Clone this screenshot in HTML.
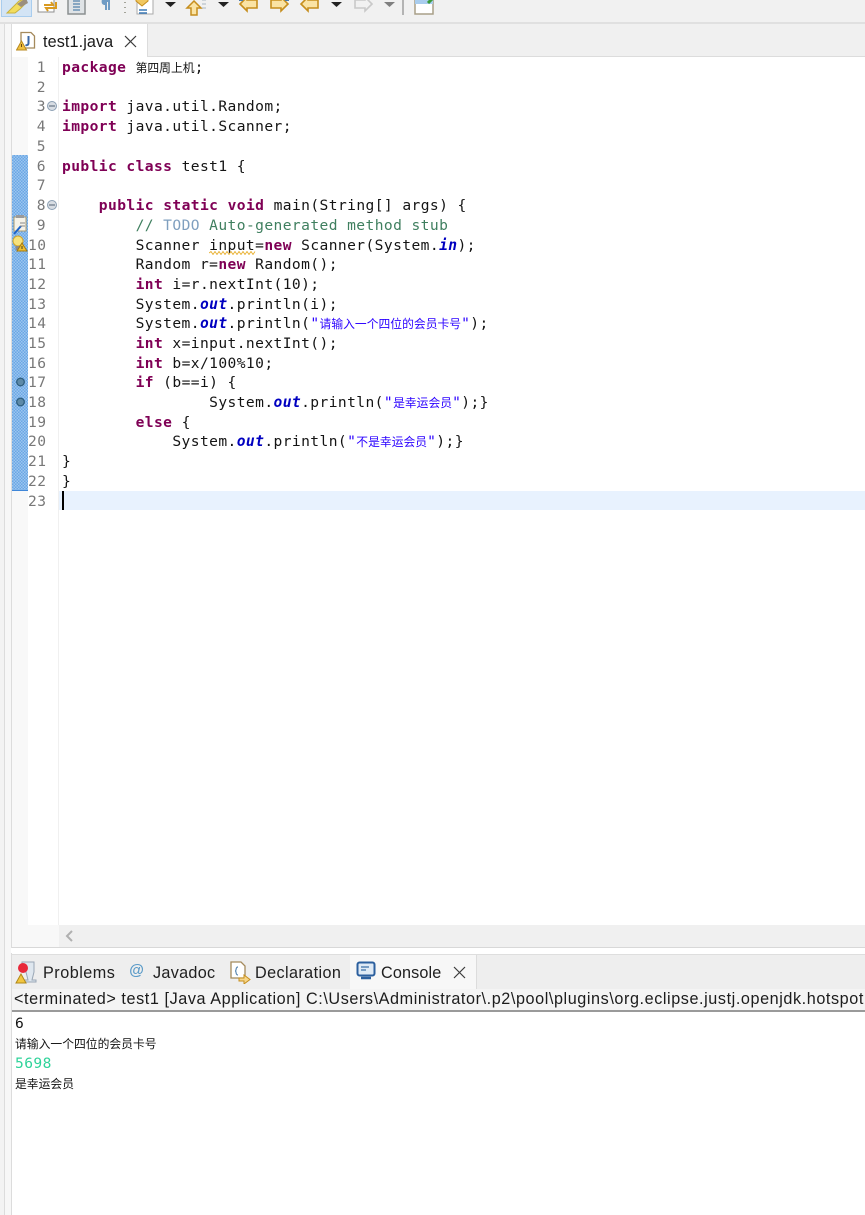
<!DOCTYPE html>
<html lang="zh"><head><meta charset="utf-8"><title>test1.java</title>
<style>
html,body{margin:0;padding:0}
body{width:865px;height:1215px;position:relative;overflow:hidden;background:#fff}
#w{position:absolute;inset:0;filter:blur(.35px)}
.a{position:absolute}
.l{position:absolute;left:62px;margin-top:1px;height:20px;font:14.6px/20px "DejaVu Sans Mono","Noto Sans CJK SC",monospace;letter-spacing:.41px;color:#141414;white-space:pre;font-weight:400}
.n{position:absolute;left:28px;margin-top:1px;width:18px;text-align:right;font:14.6px/20px "DejaVu Sans Mono",monospace;letter-spacing:.41px;color:#787878;height:20px}
.k{color:#7f0055;font-weight:700}
.f{color:#0000c0;font-style:italic;font-weight:700}
.c{color:#3f7f5f}
.t{color:#7f9fbf}
.cj{font:11.8px/20px "Noto Sans CJK SC",sans-serif;letter-spacing:0;color:#111}
.s{color:#2a00ff}
.s .cj{color:#2a00ff}
.u{font:16.2px/20px "Liberation Sans",sans-serif;letter-spacing:.3px;color:#202020;position:absolute;white-space:pre}
</style></head><body><div id="w">
<!-- toolbar -->
<div class="a" style="left:0;top:0;width:865px;height:22px;background:#f1f1f1"></div>
<div class="a" style="left:0;top:22px;width:865px;height:2px;background:#e0e0e0"></div>
<svg class="a" style="left:0;top:0" width="450" height="20" viewBox="0 0 450 20">
<rect x="1.5" y="-2" width="30" height="18.500" fill="#d3e4f5" stroke="#a9cdee"/>
<path d="M7 13 L14 6 L19 1 L24 -1 L26 3 L20 9 L15 13Z" fill="#f2dd5e" stroke="#c9b23f"/><path d="M17 4 L26 -2 L28 3 L21 7Z" fill="#9a8f7e"/>
<rect x="38" y="-2" width="16" height="14" fill="#fff" stroke="#8f8f8f"/><path d="M44 5h9l-2-3M56 2v6h-10l2 3" fill="none" stroke="#d99a20" stroke-width="2"/>
<rect x="68" y="-2" width="17" height="16" fill="#dfe3e6" stroke="#8b8f90" stroke-width="1.500"/><path d="M73 1h7M73 4h7M73 7h7M73 10h7" stroke="#5583ac" stroke-width="1.300"/>
<path d="M102 -1h8v11h-2V2h-1v8h-2V5c-3 0-4-2-3-6z" fill="#6f9bc4"/>
<path d="M125 2v1M125 7v1M125 12v1" stroke="#a3a399" stroke-width="2"/>
<rect x="137" y="-2" width="16" height="16" fill="#fff" stroke="#aaa"/><path d="M136 1l6 5 6-5v-2h-12z" fill="#f0c760" stroke="#c68e1d"/><path d="M139 10h8M139 13h8" stroke="#3a78b5" stroke-width="1.500"/>
<path d="M165 2h11l-5.500 5z" fill="#222"/>
<path d="M194 1l-7 7h4v7h6V8h4z" fill="#fae3a4" stroke="#c68e1d" stroke-width="1.500"/><path d="M202 0h4M202 4h4M202 8h4" stroke="#a9b7c4"/>
<path d="M218 2h11l-5.500 5z" fill="#222"/>
<path d="M240 4l7 7v-3h10V0h-10v-3z" fill="#fae3a4" stroke="#c68e1d" stroke-width="1.600"/><path d="M239 0h4" stroke="#4d7dab" stroke-width="2"/>
<path d="M288 4l-7 7v-3h-10V0h10v-3z" fill="#fae3a4" stroke="#c68e1d" stroke-width="1.600"/><path d="M285 0h4" stroke="#4d7dab" stroke-width="2"/>
<path d="M301 4l7 7v-3h10V0h-10v-3z" fill="#fae3a4" stroke="#c68e1d" stroke-width="1.600"/>
<path d="M331 2h11l-5.500 5z" fill="#222"/>
<path d="M372 4l-7 7v-3h-10V0h10v-3z" fill="#f1f1f1" stroke="#c9c9c9" stroke-width="1.600"/>
<path d="M384 2h11l-5.500 5z" fill="#808080"/>
<path d="M403 0v15" stroke="#a0a0a0" stroke-width="1.500"/>
<rect x="415" y="-2" width="18" height="16" fill="#fff" stroke="#a99f88" stroke-width="1.500"/><rect x="415" y="-2" width="18" height="6" fill="#a9cdee"/><path d="M428 3l5-5" stroke="#3a9a3a" stroke-width="3"/>
</svg>
<!-- left strips -->
<div class="a" style="left:0;top:24px;width:4px;height:1191px;background:#f3f3f3"></div>
<div class="a" style="left:4px;top:24px;width:1px;height:1191px;background:#dcdcdc"></div>
<div class="a" style="left:11px;top:24px;width:1px;height:924px;background:#dcdcdc"></div>
<div class="a" style="left:11px;top:953px;width:1px;height:262px;background:#dcdcdc"></div>
<div class="a" style="left:5px;top:24px;width:6px;height:1191px;background:#f7f7f7"></div>
<!-- editor tabs -->
<div class="a" style="left:12px;top:24px;width:853px;height:32px;background:#f0f0f0"></div>
<div class="a" style="left:12px;top:56px;width:853px;height:1px;background:#dcdcdc"></div>
<div class="a" style="left:12px;top:24px;width:135px;height:33px;background:#fff"></div>
<div class="a" style="left:147px;top:24px;width:1px;height:32px;background:#dcdcdc"></div>
<svg class="a" style="left:16px;top:30px" width="22" height="22" viewBox="0 0 22 22">
<path d="M5 2.500h10l3.500 3.500v12H5z" fill="#fff" stroke="#a58a5c" stroke-width="1.300"/>
<path d="M12.500 6v7c0 2-1.500 2.500-3 2" fill="none" stroke="#3a68a8" stroke-width="2"/>
<path d="M5.500 11l5 9H.5z" fill="#f0c040" stroke="#b88a20"/><path d="M5.500 14v3" stroke="#6b4a10"/>
</svg>
<div class="u" style="left:43px;top:32px;color:#1a1a1a;letter-spacing:.1px">test1.java</div>
<svg class="a" style="left:123px;top:35px" width="15" height="14"><path d="M2 1l11 11M13 1L2 12" stroke="#3c3c3c" stroke-width="1.200"/></svg>
<!-- rulers -->
<div class="a" style="left:12px;top:57px;width:16px;height:868px;background:#f8f8f8"></div>
<div class="a" style="left:58px;top:57px;width:1px;height:868px;background:#f0f0f0"></div>
<div class="a" style="left:12px;top:155px;width:16px;height:335px;background:repeating-conic-gradient(#6aa6e4 0 25%,#9cc6ef 0 50%) 0 0/3px 3px;border-bottom:1px solid #3f86d8"></div>
<div class="a" style="left:59px;top:491px;width:806px;height:19px;background:#e8f2fe"></div>
<div class="a" style="left:62px;top:491px;width:2px;height:19px;background:#000"></div>
<!-- fold markers and gutter icons -->
<svg class="a" style="left:0;top:0" width="60" height="520">
<g fill="#d8dde3" stroke="#8b9fb3"><circle cx="52" cy="106" r="4.500"/><circle cx="52" cy="205" r="4.500"/></g>
<path d="M49 106h6M49 205h6" stroke="#4f5f70"/>
<rect x="14" y="217" width="12" height="14" fill="#f4f2e8" stroke="#a99a70"/><path d="M16 215h8v3h-8z" fill="#9a9a9a"/><path d="M14 234l7-8" stroke="#1b62c9" stroke-width="2"/><path d="M20 223h5M20 226h5" stroke="#888"/>
<circle cx="18" cy="241" r="5" fill="#f7e27c" stroke="#cfa52c"/><rect x="15.500" y="246" width="5" height="4" fill="#8a8a8a"/>
<path d="M22 243l5 8h-10z" fill="#f0c030" stroke="#a47a10"/><path d="M22 246v3" stroke="#442"/>
<g fill="#5d8aa8" stroke="#2f5f80" stroke-width="1.300"><circle cx="20.500" cy="382" r="3.800"/><circle cx="20.500" cy="402" r="3.800"/></g>
</svg>
<!-- line numbers -->
<div class="n" style="top:57px">1</div><div class="n" style="top:77px">2</div><div class="n" style="top:96px">3</div><div class="n" style="top:116px">4</div><div class="n" style="top:136px">5</div><div class="n" style="top:156px">6</div><div class="n" style="top:175px">7</div><div class="n" style="top:195px">8</div><div class="n" style="top:215px">9</div><div class="n" style="top:235px">10</div><div class="n" style="top:254px">11</div><div class="n" style="top:274px">12</div><div class="n" style="top:294px">13</div><div class="n" style="top:313px">14</div><div class="n" style="top:333px">15</div><div class="n" style="top:353px">16</div><div class="n" style="top:372px">17</div><div class="n" style="top:392px">18</div><div class="n" style="top:412px">19</div><div class="n" style="top:431px">20</div><div class="n" style="top:451px">21</div><div class="n" style="top:471px">22</div><div class="n" style="top:491px">23</div>
<!-- code -->
<div class="l" style="top:57px"><span class="k">package</span> <span class="cj">第四周上机</span>;</div>
<div class="l" style="top:96px"><span class="k">import</span> java.util.Random;</div>
<div class="l" style="top:116px"><span class="k">import</span> java.util.Scanner;</div>
<div class="l" style="top:156px"><span class="k">public</span> <span class="k">class</span> test1 {</div>
<div class="l" style="top:195px">    <span class="k">public</span> <span class="k">static</span> <span class="k">void</span> main(String[] args) {</div>
<div class="l c" style="top:215px">        // <span class="t">TODO</span> Auto-generated method stub</div>
<div class="l" style="top:235px">        Scanner input=<span class="k">new</span> Scanner(System.<span class="f">in</span>);</div>
<svg class="a" style="left:209px;top:251px" width="48" height="4"><path d="M0 2l2-1.500 2 3 2-3 2 3 2-3 2 3 2-3 2 3 2-3 2 3 2-3 2 3 2-3 2 3 2-3 2 3 2-3 2 3 2-3 2 3 2-3 2 3 2-3" fill="none" stroke="#e8b030" stroke-width=".9"/></svg>
<div class="l" style="top:254px">        Random r=<span class="k">new</span> Random();</div>
<div class="l" style="top:274px">        <span class="k">int</span> i=r.nextInt(10);</div>
<div class="l" style="top:294px">        System.<span class="f">out</span>.println(i);</div>
<div class="l" style="top:313px">        System.<span class="f">out</span>.println(<span class="s">"<span class="cj">请输入一个四位的会员卡号</span>"</span>);</div>
<div class="l" style="top:333px">        <span class="k">int</span> x=input.nextInt();</div>
<div class="l" style="top:353px">        <span class="k">int</span> b=x/100%10;</div>
<div class="l" style="top:372px">        <span class="k">if</span> (b==i) {</div>
<div class="l" style="top:392px">                System.<span class="f">out</span>.println(<span class="s">"<span class="cj">是幸运会员</span>"</span>);}</div>
<div class="l" style="top:412px">        <span class="k">else</span> {</div>
<div class="l" style="top:431px">            System.<span class="f">out</span>.println(<span class="s">"<span class="cj">不是幸运会员</span>"</span>);}</div>
<div class="l" style="top:451px">}</div>
<div class="l" style="top:471px">}</div>
<!-- editor h-scroll -->
<div class="a" style="left:12px;top:925px;width:47px;height:22px;background:#f8f8f8"></div>
<div class="a" style="left:59px;top:925px;width:806px;height:22px;background:#f0f0f0"></div>
<svg class="a" style="left:64px;top:930px" width="12" height="12"><path d="M8 1L3 6l5 5" fill="none" stroke="#b0b0b0" stroke-width="2"/></svg>
<div class="a" style="left:12px;top:947px;width:853px;height:1px;background:#d8d8d8"></div>
<!-- console tabs -->
<div class="a" style="left:12px;top:954px;width:853px;height:35px;background:#eeeeee;border-top:1px solid #dedede"></div>
<div class="a" style="left:350px;top:955px;width:126px;height:34px;background:#f7f7f7;border-right:1px solid #dcdcdc"></div>
<svg class="a" style="left:14px;top:960px" width="26" height="26" viewBox="0 0 26 26">
<path d="M8 2h12v10l-2 8h4v2H9v-2h5l-2-8H8z" fill="#dfe7ef" stroke="#9aa7b5"/><circle cx="9" cy="8" r="5" fill="#e8283a"/><path d="M7 14l5 9H2z" fill="#f2c63f" stroke="#b08818"/>
</svg>
<div class="u" style="left:43px;top:963px;letter-spacing:.5px">Problems</div>
<div class="a" style="left:129px;top:961px;font:italic 700 15px/20px 'Liberation Sans',sans-serif;color:#5b9bc8">@</div>
<div class="u" style="left:153px;top:963px">Javadoc</div>
<svg class="a" style="left:229px;top:960px" width="22" height="24" viewBox="0 0 22 24">
<path d="M2 2h10l4 4v12H2z" fill="#fff" stroke="#a58a5c" stroke-width="1.300"/><path d="M9 7c-3 0-1 4-3 4 2 0 0 4 3 4" fill="none" stroke="#5f8bb3" stroke-width="1.200"/><path d="M10 18h5v-3l6 4.500-6 4.500v-3h-5z" fill="#f6d68a" stroke="#c68e1d"/>
</svg>
<div class="u" style="left:255px;top:963px;letter-spacing:.4px">Declaration</div>
<svg class="a" style="left:356px;top:961px" width="21" height="20" viewBox="0 0 21 20">
<rect x="1.500" y="1.500" width="17" height="13" rx="2" fill="#dfeaf5" stroke="#2b5f9e" stroke-width="2"/><path d="M5 6h8M5 9h5" stroke="#3a6fa8" stroke-width="1.300"/><path d="M5 17h10" stroke="#2b5f9e" stroke-width="2.500"/>
</svg>
<div class="u" style="left:381px;top:963px;letter-spacing:.15px">Console</div>
<svg class="a" style="left:452px;top:965px" width="15" height="15"><path d="M2 2l11 11M13 2L2 13" stroke="#3c3c3c" stroke-width="1.200"/></svg>
<!-- console -->
<div class="a" style="left:12px;top:989px;width:853px;height:21px;background:#f4f4f4"></div>
<div class="a" style="left:12px;top:1010px;width:853px;height:1.500px;background:#9a9a9a"></div>
<div class="u" style="left:14px;top:989px;width:851px;overflow:hidden;color:#1c1c1c;letter-spacing:.58px">&lt;terminated&gt; test1 [Java Application] C:\Users\Administrator\.p2\pool\plugins\org.eclipse.justj.openjdk.hotspot.jre.full.win32</div>
<div class="l" style="left:15px;top:1013px">6</div>
<div class="l cj" style="left:15px;top:1033px">请输入一个四位的会员卡号</div>
<div class="l" style="left:15px;top:1053px;color:#2fd39a">5698</div>
<div class="l cj" style="left:15px;top:1073px">是幸运会员</div>
</div></body></html>
